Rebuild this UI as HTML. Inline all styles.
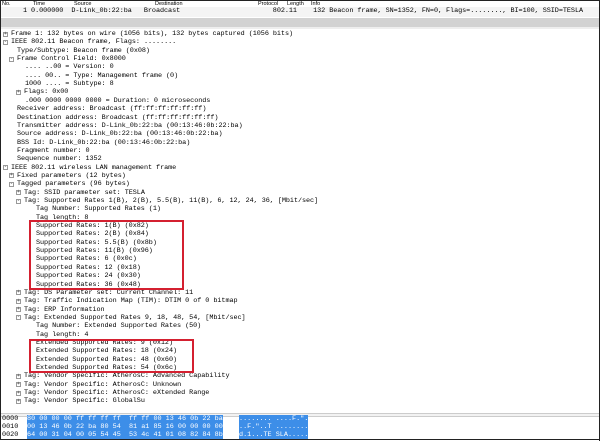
<!DOCTYPE html>
<html><head><meta charset="utf-8"><style>
*{margin:0;padding:0;box-sizing:border-box}
body{width:600px;height:440px;background:#fff;position:relative;overflow:hidden;font-family:"Liberation Mono",monospace;font-size:6.8px;color:#000;border:1px solid #222}
.s{position:absolute;font-family:"Liberation Sans",sans-serif;font-size:5.5px;top:0}
.l{position:absolute;white-space:pre;line-height:8px;letter-spacing:-0.05px}
.ic{position:absolute;width:5px;height:5px;border:1px solid #999;font-size:5px;line-height:3px;text-align:center;color:#444;font-family:"Liberation Sans",sans-serif}
.box{position:absolute;border:2px solid #d42030}
.hx{position:absolute;white-space:pre;line-height:8px}
.sel{background:#3d8ee8;color:#fff}
</style></head><body>
<div class="s" style="left:1px">No.</div><div class="s" style="left:32px">Time</div><div class="s" style="left:73px">Source</div><div class="s" style="left:154px">Destination</div><div class="s" style="left:257px">Protocol</div><div class="s" style="left:286px">Length</div><div class="s" style="left:310px">Info</div>
<div style="position:absolute;left:0;top:6px;width:600px;height:10px;background:#f4f4f4"></div>
<div class="l" style="top:6px;left:22px">1 0.000000  D-Link_0b:22:ba   Broadcast                       802.11    132 Beacon frame, SN=1352, FN=0, Flags=........, BI=100, SSID=TESLA</div>
<div style="position:absolute;left:0;top:17px;width:600px;height:9px;background:#d2d2d2"></div>
<div style="position:absolute;left:0;top:26px;width:600px;height:2px;background:#eee"></div>
<div style="position:absolute;left:598px;top:0;width:2px;height:440px;background:#222"></div>
<div id="t"></div>
<div class="box" style="left:28px;top:219px;width:155px;height:70px"></div>
<div class="box" style="left:28px;top:338px;width:165px;height:34px"></div>
<div style="position:absolute;left:0;top:412px;width:598px;height:4px;border-top:1px solid #ccc;border-bottom:1px solid #ccc;background:#f2f2f2"></div>
<div class="hx" style="left:1px;top:414px">0000
0010
0020</div>
<div class="hx" style="left:26px;top:414px"><span class="sel">80 00 00 00 ff ff ff ff  ff ff 00 13 46 0b 22 ba</span>
<span class="sel">00 13 46 0b 22 ba 80 54  81 a1 85 16 00 00 00 00</span>
<span class="sel">64 00 31 04 00 05 54 45  53 4c 41 01 08 82 84 8b</span></div>
<div class="hx" style="left:238px;top:414px"><span class="sel">........ ....F.".</span>
<span class="sel">..F."..T ........</span>
<span class="sel">d.1...TE SLA.....</span></div>
<script>
var L=[[10,'+','Frame 1: 132 bytes on wire (1056 bits), 132 bytes captured (1056 bits)'],
[10,'-','IEEE 802.11 Beacon frame, Flags: ........'],
[16,'','Type/Subtype: Beacon frame (0x08)'],
[16,'-','Frame Control Field: 0x8000'],
[24,'','.... ..00 = Version: 0'],
[24,'','.... 00.. = Type: Management frame (0)'],
[24,'','1000 .... = Subtype: 8'],
[23,'+','Flags: 0x00'],
[24,'','.000 0000 0000 0000 = Duration: 0 microseconds'],
[16,'','Receiver address: Broadcast (ff:ff:ff:ff:ff:ff)'],
[16,'','Destination address: Broadcast (ff:ff:ff:ff:ff:ff)'],
[16,'','Transmitter address: D-Link_0b:22:ba (00:13:46:0b:22:ba)'],
[16,'','Source address: D-Link_0b:22:ba (00:13:46:0b:22:ba)'],
[16,'','BSS Id: D-Link_0b:22:ba (00:13:46:0b:22:ba)'],
[16,'','Fragment number: 0'],
[16,'','Sequence number: 1352'],
[10,'-','IEEE 802.11 wireless LAN management frame'],
[16,'+','Fixed parameters (12 bytes)'],
[16,'-','Tagged parameters (96 bytes)'],
[23,'+','Tag: SSID parameter set: TESLA'],
[23,'-','Tag: Supported Rates 1(B), 2(B), 5.5(B), 11(B), 6, 12, 24, 36, [Mbit/sec]'],
[35,'','Tag Number: Supported Rates (1)'],
[35,'','Tag length: 8'],
[35,'','Supported Rates: 1(B) (0x82)'],
[35,'','Supported Rates: 2(B) (0x84)'],
[35,'','Supported Rates: 5.5(B) (0x8b)'],
[35,'','Supported Rates: 11(B) (0x96)'],
[35,'','Supported Rates: 6 (0x0c)'],
[35,'','Supported Rates: 12 (0x18)'],
[35,'','Supported Rates: 24 (0x30)'],
[35,'','Supported Rates: 36 (0x48)'],
[23,'+','Tag: DS Parameter set: Current Channel: 11'],
[23,'+','Tag: Traffic Indication Map (TIM): DTIM 0 of 0 bitmap'],
[23,'+','Tag: ERP Information'],
[23,'-','Tag: Extended Supported Rates 9, 18, 48, 54, [Mbit/sec]'],
[35,'','Tag Number: Extended Supported Rates (50)'],
[35,'','Tag length: 4'],
[35,'','Extended Supported Rates: 9 (0x12)'],
[35,'','Extended Supported Rates: 18 (0x24)'],
[35,'','Extended Supported Rates: 48 (0x60)'],
[35,'','Extended Supported Rates: 54 (0x6c)'],
[23,'+','Tag: Vendor Specific: AtherosC: Advanced Capability'],
[23,'+','Tag: Vendor Specific: AtherosC: Unknown'],
[23,'+','Tag: Vendor Specific: AtherosC: eXtended Range'],
[23,'+','Tag: Vendor Specific: GlobalSu']];
var h='';L.forEach(function(r,i){var y=29+i*8.35;
h+='<div class="l" style="left:'+r[0]+'px;top:'+y.toFixed(1)+'px">'+r[2]+'</div>';
if(r[1])h+='<div class="ic" style="left:'+(r[0]-8)+'px;top:'+(y+1.5).toFixed(1)+'px">'+r[1]+'</div>';});
document.getElementById('t').innerHTML=h;
</script>
</body></html>
